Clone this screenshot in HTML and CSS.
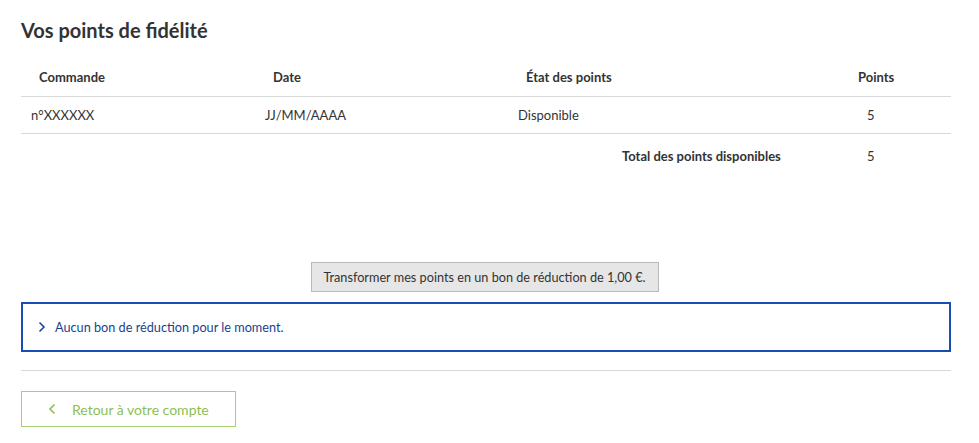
FILE: index.html
```html
<!DOCTYPE html>
<html lang="fr">
<head>
<meta charset="utf-8">
<link rel="stylesheet" href="styles.css">
</head>
<body>
<div class="page">
  <h1 class="title">Vos points de fidélité</h1>
  <div class="table">
    <div class="row head">
      <div class="c1">Commande</div>
      <div class="c2">Date</div>
      <div class="c3">État des points</div>
      <div class="c4">Points</div>
    </div>
    <div class="row body">
      <div class="c1">n°XXXXXX</div>
      <div class="c2">JJ/MM/AAAA</div>
      <div class="c3">Disponible</div>
      <div class="c4">5</div>
    </div>
    <div class="row total">
      <div class="c1"></div>
      <div class="c2"></div>
      <div class="c3">Total des points disponibles</div>
      <div class="c4">5</div>
    </div>
  </div>
  <div class="transform">
    <button class="btn-transform">Transformer mes points en un bon de réduction de 1,00 €.</button>
  </div>
  <div class="vouchers">
    <svg class="chev" width="8" height="12" viewBox="0 0 8 12"><path d="M1.5 1.5 L6 6 L1.5 10.5" fill="none" stroke="#1b47a8" stroke-width="1.6"/></svg>
    <span>Aucun bon de réduction pour le moment.</span>
  </div>
  <hr class="sep">
  <a class="back" href="#">
    <svg class="chev" width="8" height="12" viewBox="0 0 8 12"><path d="M6.5 1.5 L2 6 L6.5 10.5" fill="none" stroke="#8cbf52" stroke-width="1.6"/></svg>
    <span>Retour à votre compte</span>
  </a>
</div>
</body>
</html>
```
FILE: styles.css
```css
* { box-sizing: border-box; }
html, body { margin: 0; padding: 0; background: #fff; }
body {
  font-family: Lato, "Open Sans", sans-serif;
  color: #333;
  font-size: 13px;
}
.page {
  width: 930px;
  margin-left: 21px;
  padding-top: 17px;
}
.title {
  margin: 0;
  font-size: 20px;
  font-weight: 700;
  line-height: 26px;
  color: #333;
}
.table { margin-top: 16px; }
.row {
  display: grid;
  grid-template-columns: 234px 253px 349px 94px;
  align-items: center;
}
.head {
  height: 38px;
  font-weight: 700;
  border-bottom: 1px solid #d9d9d9;
  padding-bottom: 1px;
}
.head > div { padding-left: 18px; }
.head .c4 { padding-left: 1px; }
.body {
  height: 37px;
  border-bottom: 1px solid #d9d9d9;
}
.body > div { padding-left: 10px; }
.total {
  height: 44px;
}
.total .c3 { padding-left: 114px; font-weight: 700; }
.total .c4 { padding-left: 10px; }
.transform {
  display: flex;
  justify-content: center;
  margin-top: 84px;
}
.btn-transform {
  font-family: inherit;
  font-size: 12.7px;
  color: #333;
  background: #e6e6e6;
  border: 1px solid #b9b9b9;
  height: 30px;
  width: 348px;
  padding: 0;
  margin-left: -3px;
}
.vouchers {
  margin-top: 10px;
  height: 50px;
  border: 2px solid #1a4db3;
  display: flex;
  align-items: center;
  gap: 9px;
  padding-left: 15px;
  color: #1b3f8f;
  font-size: 12.7px;
}
.sep {
  margin: 18px 0 0;
  border: 0;
  border-top: 1px solid #d9d9d9;
  height: 0;
}
.back {
  margin-top: 20px;
  display: inline-flex;
  align-items: center;
  gap: 16px;
  width: 215px;
  height: 36px;
  border: 1px solid #a6cf74;
  padding-left: 26px;
  text-decoration: none;
  color: #8cbf52;
  font-size: 14px;
}
```
